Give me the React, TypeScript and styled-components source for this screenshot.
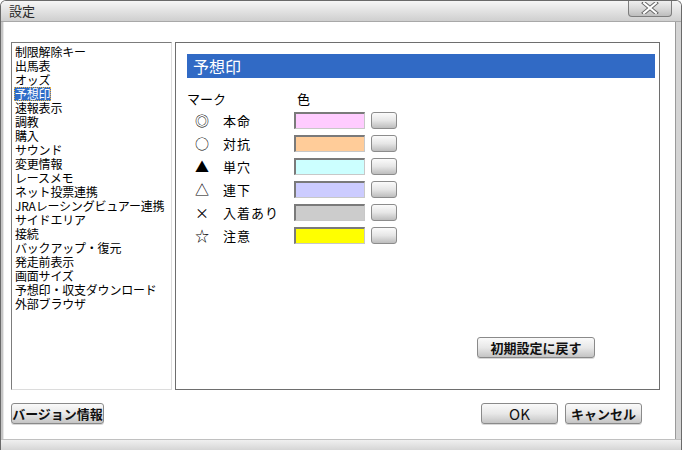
import styled, { createGlobalStyle } from "styled-components";

const GlobalStyle = createGlobalStyle`
  html, body {
    margin: 0;
    padding: 0;
    background: #ffffff;
  }
  body {
    font-family: "Noto Sans CJK JP", "Noto Sans", sans-serif;
  }
`;

const JP = `"Noto Sans CJK JP", "Liberation Sans", sans-serif`;

const Window = styled.div`
  width: 682px;
  height: 450px;
  box-sizing: border-box;
  display: flex;
  flex-direction: column;
  background: #ffffff;
  border: 1px solid #6a6a6a;
  border-bottom: none;
  border-radius: 6px 6px 0 0;
  overflow: hidden;
`;

const TitleBar = styled.div`
  height: 20px;
  flex: 0 0 20px;
  display: flex;
  align-items: flex-start;
  background: linear-gradient(#f6f6f6, #e4e4e4 45%, #cfcfcf);
  border-bottom: 1px solid #a8a8a8;
  padding-left: 8px;
`;

const Title = styled.div`
  font-family: ${JP};
  font-size: 13px;
  line-height: 19px;
  color: #2a2a2a;
`;

const CloseButton = styled.div`
  margin-left: auto;
  margin-right: 9px;
  margin-top: -1px;
  width: 44px;
  height: 17px;
  box-sizing: border-box;
  border: 1px solid #7d7d7d;
  border-top: none;
  border-radius: 0 0 4px 4px;
  background: linear-gradient(#f2f2f2, #d8d8d8 55%, #bdbdbd);
  display: flex;
  align-items: center;
  justify-content: center;
`;

const Body = styled.div`
  flex: 1;
  display: flex;
  flex-direction: column;
  padding: 20px 15px 15px 8px;
  border-left: 2px solid #c6c6c6;
  border-right: 5px solid #d4d4d4;
  box-shadow: inset 1px 0 0 #e8e8e8, inset -1px 0 0 #9a9a9a;
`;

const Content = styled.div`
  display: flex;
  gap: 3px;
  height: 348px;
`;

const ListBox = styled.div`
  width: 161px;
  box-sizing: border-box;
  border-top: 1px solid #7c7c7c;
  border-left: 1px solid #7c7c7c;
  border-right: 1px solid #dcdcdc;
  border-bottom: 1px solid #dcdcdc;
  padding: 2px 0 0 2px;
  display: flex;
  flex-direction: column;
  align-items: flex-start;
`;

const ListItem = styled.div<{ $selected?: boolean }>`
  font-family: ${JP};
  font-size: 12px;
  line-height: 14px;
  height: 14px;
  padding: 0 1px;
  white-space: nowrap;
  letter-spacing: -0.2px;
  color: ${(p) => (p.$selected ? "#ffffff" : "#000000")};
  background: ${(p) => (p.$selected ? "#2e6cc8" : "transparent")};
  outline: ${(p) => (p.$selected ? "1px dotted #e8b040" : "none")};
  outline-offset: -1px;
`;

const Panel = styled.div`
  width: 485px;
  box-sizing: border-box;
  border: 1px solid #6e6e6e;
  padding: 11px 4px 31px 11px;
  display: flex;
  flex-direction: column;
`;

const PanelHeader = styled.div`
  height: 24px;
  background: #316ac5;
  color: #ffffff;
  font-family: ${JP};
  font-size: 16px;
  line-height: 24px;
  padding-left: 6px;
`;

const ColumnHeads = styled.div`
  display: grid;
  grid-template-columns: 108px 1fr;
  margin-top: 10px;
  height: 20px;
  align-items: center;
  font-family: ${JP};
  font-size: 13px;
  color: #000;
`;

const ColorHead = styled.span`
  padding-left: 2px;
`;

const Rows = styled.div`
  display: flex;
  flex-direction: column;
  gap: 6px;
  margin-top: 4px;
`;

const Row = styled.div`
  display: grid;
  grid-template-columns: 36px 71px 72px 26px;
  height: 17px;
  align-items: center;
  font-family: ${JP};
  font-size: 13px;
  color: #000;
`;

const Mark = styled.span`
  padding-left: 8px;
  font-size: 14px;
  line-height: 17px;
`;

const Label = styled.span`
  letter-spacing: 1px;
  line-height: 17px;
`;

const Swatch = styled.div<{ $color: string }>`
  width: 71px;
  height: 17px;
  box-sizing: border-box;
  background: ${(p) => p.$color};
  border-top: 2px solid #7a7a7a;
  border-left: 2px solid #7a7a7a;
  border-right: 1px solid #c8c8c8;
  border-bottom: 1px solid #c8c8c8;
`;

const PickButton = styled.div`
  margin-left: 5px;
  width: 26px;
  height: 17px;
  box-sizing: border-box;
  border: 1px solid #8c8c8c;
  border-radius: 3px;
  background: linear-gradient(#fbfbfb, #e6e6e6 50%, #bdbdbd);
`;

const Button = styled.button<{ $width: number; $bold?: boolean; $size?: number }>`
  width: ${(p) => p.$width}px;
  height: 21px;
  box-sizing: border-box;
  padding: 0;
  border: 1px solid #8a8a8a;
  border-radius: 3px;
  background: linear-gradient(#fafafa, #e8e8e8 50%, #c4c4c4);
  font-family: ${JP};
  font-size: ${(p) => p.$size ?? 13}px;
  font-weight: ${(p) => (p.$bold ? 700 : 400)};
  color: #111;
  line-height: 19px;
  box-shadow: 0 1px 0 #d8d8d8;
`;

const ResetRow = styled.div`
  margin-top: auto;
  display: flex;
  justify-content: flex-end;
  padding-right: 60px;
`;

const Footer = styled.div`
  display: flex;
  align-items: center;
  margin-top: 13px;
  padding-right: 19px;
  gap: 7px;
`;

const FooterSpacer = styled.div`
  flex: 1;
`;

const BottomBar = styled.div`
  height: 12px;
  flex: 0 0 12px;
  background: linear-gradient(#f0f0f0, #d6d6d6);
  border-top: 1px solid #c0c0c0;
  border-bottom: 1px solid #7a7a7a;
  box-sizing: border-box;
`;

const items = [
  "制限解除キー",
  "出馬表",
  "オッズ",
  "予想印",
  "速報表示",
  "調教",
  "購入",
  "サウンド",
  "変更情報",
  "レースメモ",
  "ネット投票連携",
  "JRAレーシングビュアー連携",
  "サイドエリア",
  "接続",
  "バックアップ・復元",
  "発走前表示",
  "画面サイズ",
  "予想印・収支ダウンロード",
  "外部ブラウザ",
];

const marks = [
  { mark: "◎", label: "本命", color: "#ffccff" },
  { mark: "○", label: "対抗", color: "#ffcc99" },
  { mark: "▲", label: "単穴", color: "#ccffff" },
  { mark: "△", label: "連下", color: "#ccccff" },
  { mark: "×", label: "入着あり", color: "#cccccc" },
  { mark: "☆", label: "注意", color: "#ffff00" },
];

export default function App() {
  return (
    <>
      <GlobalStyle />
      <Window>
        <TitleBar>
          <Title>設定</Title>
          <CloseButton>
            <svg width="18" height="12" viewBox="0 0 18 12">
              <path
                d="M3 1 L15 11 M15 1 L3 11"
                stroke="#6a6a6a"
                strokeWidth="4"
                strokeLinecap="square"
              />
              <path
                d="M3 1 L15 11 M15 1 L3 11"
                stroke="#ffffff"
                strokeWidth="2"
                strokeLinecap="square"
              />
            </svg>
          </CloseButton>
        </TitleBar>
        <Body>
          <Content>
            <ListBox>
              {items.map((it) => (
                <ListItem key={it} $selected={it === "予想印"}>
                  {it}
                </ListItem>
              ))}
            </ListBox>
            <Panel>
              <PanelHeader>予想印</PanelHeader>
              <ColumnHeads>
                <span>マーク</span>
                <ColorHead>色</ColorHead>
              </ColumnHeads>
              <Rows>
                {marks.map((m) => (
                  <Row key={m.label}>
                    <Mark>{m.mark}</Mark>
                    <Label>{m.label}</Label>
                    <Swatch $color={m.color} />
                    <PickButton />
                  </Row>
                ))}
              </Rows>
              <ResetRow>
                <Button $width={118} $bold>
                  初期設定に戻す
                </Button>
              </ResetRow>
            </Panel>
          </Content>
          <Footer>
            <Button $width={93} $bold>
              バージョン情報
            </Button>
            <FooterSpacer />
            <Button $width={77} $size={15}>
              OK
            </Button>
            <Button $width={77} $bold>
              キャンセル
            </Button>
          </Footer>
        </Body>
        <BottomBar />
      </Window>
    </>
  );
}
